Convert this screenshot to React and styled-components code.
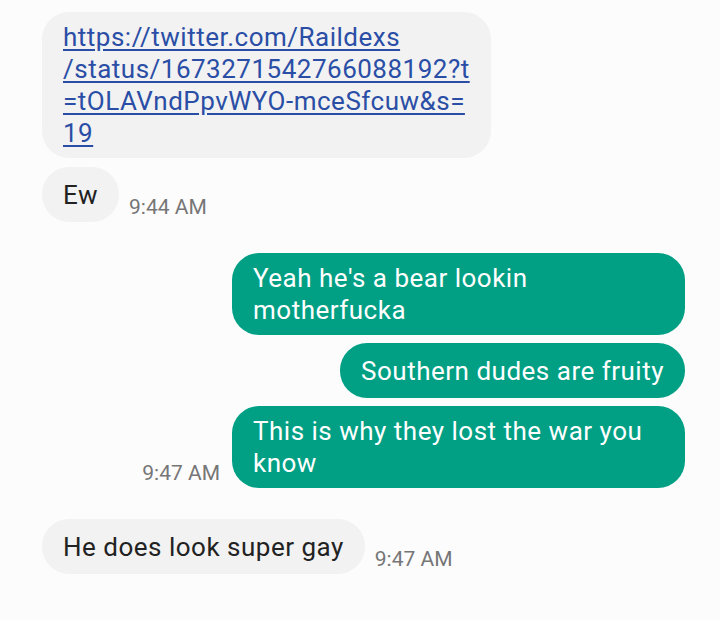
import React from 'react';
import styled, { createGlobalStyle } from 'styled-components';

const GlobalStyle = createGlobalStyle`
  html, body {
    margin: 0;
    padding: 0;
    background: #fcfcfc;
  }
  body {
    font-family: Roboto, "Noto Sans", Arial, sans-serif;
  }
`;

const messages = [
  { id: 1, from: 'them', link: true, lines: ['https://twitter.com/Raildexs', '/status/1673271542766088192?t', '=tOLAVndPpvWYO-mceSfcuw&s=', '19'] },
  { id: 2, from: 'them', text: 'Ew', time: '9:44 AM', gap: 9 },
  { id: 3, from: 'me', text: "Yeah he's a bear lookin motherfucka", gap: 31 },
  { id: 4, from: 'me', text: 'Southern dudes are fruity', gap: 8 },
  { id: 5, from: 'me', text: 'This is why they lost the war you know', time: '9:47 AM', gap: 8 },
  { id: 6, from: 'them', text: 'He does look super gay', time: '9:47 AM', gap: 31 },
];

function App() {
  return (
    <>
      <GlobalStyle />
      <Thread>
        {messages.map((m) => (
          <Row key={m.id} $mine={m.from === 'me'} $gap={m.gap || 0}>
            <Bubble $mine={m.from === 'me'}>
              {m.link ? (
                <Link href="#">
                  {m.lines.map((l, i) => (
                    <React.Fragment key={i}>
                      {l}
                      {i < m.lines.length - 1 && <br />}
                    </React.Fragment>
                  ))}
                </Link>
              ) : (
                m.text
              )}
            </Bubble>
            {m.time && <Time $mine={m.from === 'me'}>{m.time}</Time>}
          </Row>
        ))}
      </Thread>
    </>
  );
}

export default App;

const Thread = styled.div`
  display: flex;
  flex-direction: column;
  padding: 12px 35px 0 42px;
`;

const Row = styled.div`
  display: flex;
  flex-direction: ${(p) => (p.$mine ? 'row-reverse' : 'row')};
  align-items: flex-end;
  margin-top: ${(p) => p.$gap}px;
`;

const Bubble = styled.div`
  box-sizing: border-box;
  max-width: 453px;
  min-height: 55px;
  display: flex;
  align-items: center;
  padding: 9px 21px;
  border-radius: 27px;
  font-size: 26px;
  letter-spacing: 0.5px;
  line-height: 32px;
  background: ${(p) => (p.$mine ? '#01a085' : '#f2f2f2')};
  color: ${(p) => (p.$mine ? '#ffffff' : '#222222')};
`;

const Link = styled.a`
  color: #2a4ea6;
  text-decoration: underline;
  text-underline-offset: 3px;
`;

const Time = styled.span`
  font-size: 21px;
  line-height: 24px;
  color: #767676;
  padding-bottom: 3px;
  margin: ${(p) => (p.$mine ? '0 12px 0 0' : '0 0 0 10px')};
`;
